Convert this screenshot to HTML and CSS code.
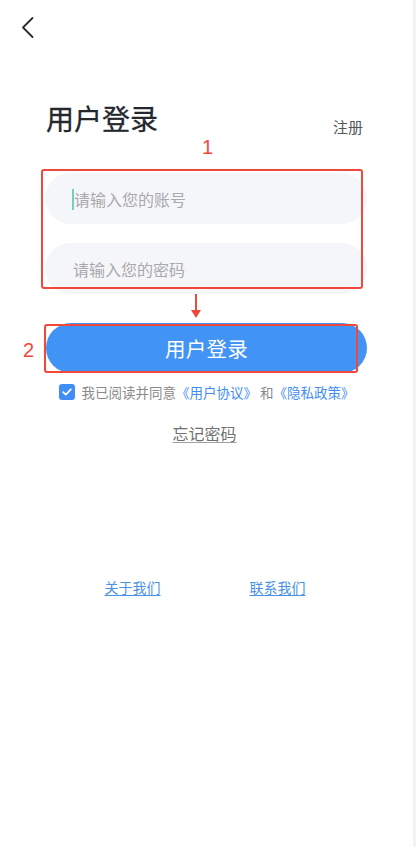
FILE: index.html
```html
<!DOCTYPE html>
<html lang="zh">
<head>
<meta charset="utf-8">
<title>用户登录</title>
<link rel="stylesheet" href="styles.css">
</head>
<body>
<div class="app">
  <div class="header">
    <svg class="back" width="16" height="25" viewBox="0 0 16 25"><path d="M12.5 3 L3 12.5 L12.5 22" fill="none" stroke="#2b2b2b" stroke-width="1.8" stroke-linecap="round" stroke-linejoin="round"/></svg>
  </div>
  <div class="title-row">
    <h1 class="title">用户登录</h1>
    <span class="register">注册</span>
  </div>
  <div class="form">
    <div class="field field-first"><span class="caret"></span><span class="ph">请输入您的账号</span></div>
    <div class="field field-second"><span class="ph">请输入您的密码</span></div>
    <div class="btn">用户登录</div>
    <div class="agree">
      <span class="check"><svg width="10" height="8" viewBox="0 0 10 8"><path d="M1.2 4.2 L3.8 6.6 L8.8 1.4" fill="none" stroke="#fff" stroke-width="1.7" stroke-linecap="round" stroke-linejoin="round"/></svg></span>
      <span class="agree-text">我已阅读并同意<span class="blue">《用户协议》</span> 和<span class="blue">《隐私政策》</span></span>
    </div>
    <div class="forgot">忘记密码</div>
  </div>
  <div class="links">
    <span class="link">关于我们</span>
    <span class="link">联系我们</span>
  </div>

  <span class="anno anno-1">1</span>
  <div class="anno-box box-1"></div>
  <div class="anno-arrow"><span class="shaft"></span><span class="head"></span></div>
  <span class="anno anno-2">2</span>
  <div class="anno-box box-2"></div>
</div>
</body>
</html>
```
FILE: styles.css
```css
html, body {
  margin: 0;
  padding: 0;
  background: #f3f3f3;
}
body {
  font-family: "Noto Sans CJK SC", "Noto Sans", sans-serif;
}
.app {
  position: relative;
  width: 413px;
  height: 847px;
  background: #ffffff;
  overflow: hidden;
}
.header {
  height: 54px;
  padding-left: 20px;
  padding-top: 15px;
  box-sizing: border-box;
}
.back {
  display: block;
}
.title-row {
  margin-top: 44px;
  height: 40px;
  padding: 0 50px 0 46px;
  display: flex;
  justify-content: space-between;
}
.title {
  margin: 0;
  font-size: 28px;
  line-height: 40px;
  font-weight: 400;
  color: #24272c;
  -webkit-text-stroke: 0.3px #24272c;
}
.register {
  align-self: flex-end;
  margin-bottom: 1px;
  font-size: 15px;
  line-height: 20px;
  color: #555;
}
.form {
  margin-left: 45px;
  width: 322px;
  display: flex;
  flex-direction: column;
}
.field {
  height: 51px;
  border-radius: 26px;
  background: #f5f6fa;
  display: flex;
  align-items: center;
  font-size: 16px;
  color: #a9a9ab;
}
.field-first {
  margin-top: 35px;
  padding-left: 27px;
}
.field-second {
  margin-top: 19px;
  padding-left: 28px;
}
.caret {
  width: 2px;
  height: 21px;
  background: #6fcfc2;
  margin-right: 0;
  margin-top: 1px;
}
.ph {
  line-height: 22px;
}
.btn {
  margin-top: 29px;
  margin-left: 1px;
  height: 50px;
  border-radius: 25px;
  background: #4293f6;
  color: #ffffff;
  font-size: 20.5px;
  line-height: 50px;
  text-align: center;
  letter-spacing: 0.3px;
}
.agree {
  margin-top: 9px;
  height: 20px;
  display: flex;
  align-items: center;
  justify-content: center;
  padding-left: 2px;
}
.check {
  width: 16px;
  height: 16px;
  border-radius: 3px;
  background: #3f8ef5;
  display: flex;
  align-items: center;
  justify-content: center;
  margin-right: 6px;
}
.check svg {
  display: block;
}
.agree-text {
  font-size: 13.5px;
  line-height: 20px;
  color: #8a8a8a;
  white-space: pre;
}
.blue {
  color: #3f8ef5;
}
.forgot {
  margin-top: 20px;
  align-self: center;
  margin-right: 3px;
  font-size: 16px;
  line-height: 22px;
  color: #707070;
  text-decoration: underline;
  text-decoration-color: #a0a0a0;
  text-underline-offset: 2px;
}
.links {
  margin-top: 133px;
  display: flex;
  justify-content: center;
  gap: 89px;
  padding-right: 3px;
}
.link {
  font-size: 14px;
  line-height: 20px;
  color: #4a91e6;
  text-decoration: underline;
  text-underline-offset: 2px;
}

/* annotation overlays */
.anno {
  position: absolute;
  font-family: "Liberation Sans", Arial, sans-serif;
  font-size: 20px;
  line-height: 20px;
  color: #f2483c;
}
.anno-1 {
  left: 202px;
  top: 137px;
}
.anno-2 {
  left: 23px;
  top: 340px;
}
.anno-box {
  position: absolute;
  border: 2px solid #f2483c;
  border-radius: 3px;
  box-sizing: border-box;
}
.box-1 {
  left: 41px;
  top: 169px;
  width: 322px;
  height: 120px;
}
.box-2 {
  left: 44px;
  top: 324px;
  width: 314px;
  height: 49px;
}
.anno-arrow {
  position: absolute;
  left: 190px;
  top: 294px;
  width: 12px;
  height: 24px;
  display: flex;
  flex-direction: column;
  align-items: center;
}
.shaft {
  width: 2px;
  height: 16px;
  background: #f2483c;
}
.head {
  width: 0;
  height: 0;
  border-left: 5.5px solid transparent;
  border-right: 5.5px solid transparent;
  border-top: 8px solid #f2483c;
}
```
